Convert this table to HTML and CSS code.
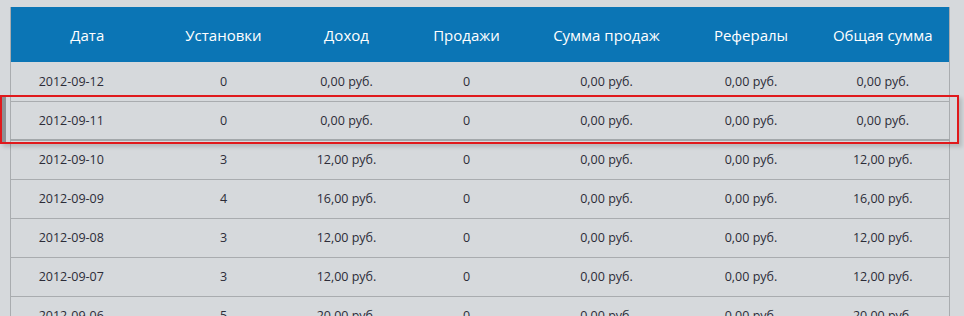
FILE: index.html
```html
<!DOCTYPE html>
<html lang="ru">
<head>
  <meta charset="UTF-8" />
  <title>Статистика</title>
  <link rel="stylesheet" href="styles.css">
</head>
<body>
  <div class="stats">
    <table class="stats-table">
      <thead>
        <tr>
          <th>Дата</th>
          <th>Установки</th>
          <th>Доход</th>
          <th>Продажи</th>
          <th>Сумма продаж</th>
          <th>Рефералы</th>
          <th>Общая сумма</th>
        </tr>
      </thead>
      <tbody>
        <tr>
          <td>2012-09-12</td><td>0</td><td>0,00 руб.</td><td>0</td><td>0,00 руб.</td><td>0,00 руб.</td><td>0,00 руб.</td>
        </tr>
        <tr class="picked">
          <td>2012-09-11</td><td>0</td><td>0,00 руб.</td><td>0</td><td>0,00 руб.</td><td>0,00 руб.</td><td>0,00 руб.</td>
        </tr>
        <tr>
          <td>2012-09-10</td><td>3</td><td>12,00 руб.</td><td>0</td><td>0,00 руб.</td><td>0,00 руб.</td><td>12,00 руб.</td>
        </tr>
        <tr>
          <td>2012-09-09</td><td>4</td><td>16,00 руб.</td><td>0</td><td>0,00 руб.</td><td>0,00 руб.</td><td>16,00 руб.</td>
        </tr>
        <tr>
          <td>2012-09-08</td><td>3</td><td>12,00 руб.</td><td>0</td><td>0,00 руб.</td><td>0,00 руб.</td><td>12,00 руб.</td>
        </tr>
        <tr>
          <td>2012-09-07</td><td>3</td><td>12,00 руб.</td><td>0</td><td>0,00 руб.</td><td>0,00 руб.</td><td>12,00 руб.</td>
        </tr>
        <tr>
          <td>2012-09-06</td><td>5</td><td>20,00 руб.</td><td>0</td><td>0,00 руб.</td><td>0,00 руб.</td><td>20,00 руб.</td>
        </tr>
      </tbody>
    </table>
    <!-- red frame drawn over the selected row -->
    <div class="row-mark"></div>
  </div>
</body>
</html>
```

FILE: styles.css
```css
body {
  margin: 0;
  padding: 7px 15px 0 10px;
  background: #d6d9dc;
  font-family: "Open Sans", "Liberation Sans", sans-serif;
  color: #2c2c38;
  overflow: hidden;
}

.stats {
  position: relative;
}

.stats-table {
  width: 939px;
  border-collapse: collapse;
  table-layout: fixed;
  border-left: 1px solid #a9acaf;
  border-right: 1px solid #a9acaf;
}

.stats-table th,
.stats-table td {
  box-sizing: border-box;
  padding: 0;
  text-align: center;
}

.stats-table th {
  background: #0b75b5;
  color: #fff;
  font-weight: normal;
  font-size: 15px;
  height: 55px;
}

.stats-table td {
  height: 39px;
  font-size: 12.5px;
  border-bottom: 1px solid #a9acaf;
}

/* column widths, centred on the original text positions */
.stats-table th:nth-child(1), .stats-table td:nth-child(1) { width: 137px; }
.stats-table th:nth-child(2), .stats-table td:nth-child(2) { width: 138px; }
.stats-table th:nth-child(3), .stats-table td:nth-child(3) { width: 122px; }
.stats-table th:nth-child(4), .stats-table td:nth-child(4) { width: 128px; }
.stats-table th:nth-child(5), .stats-table td:nth-child(5) { width: 142px; }
.stats-table th:nth-child(6), .stats-table td:nth-child(6) { width: 139px; }
.stats-table th:nth-child(7), .stats-table td:nth-child(7) { width: 133px; }

.stats-table td:nth-child(1) { padding-right: 16px; }
.stats-table th:nth-child(1) { padding-left: 16px; }
.stats-table td:nth-child(2), .stats-table th:nth-child(2) { padding-left: 14px; }
.stats-table td:nth-child(4), .stats-table th:nth-child(4) { padding-right: 10px; }
.stats-table td:nth-child(6), .stats-table th:nth-child(6) { padding-left: 8px; }

.stats-table tr.picked td {
  border-top: 1px solid #9a9ea1;
  border-bottom: 2px solid #a3a7aa;
}

.row-mark {
  position: absolute;
  left: -10px;
  top: 88px;
  width: 955px;
  height: 45px;
  border: 2px solid #e0191c;
  box-shadow: inset 4px 0 0 #8e9194, 3px 3px 4px rgba(0,0,0,0.15);
  pointer-events: none;
}
```
